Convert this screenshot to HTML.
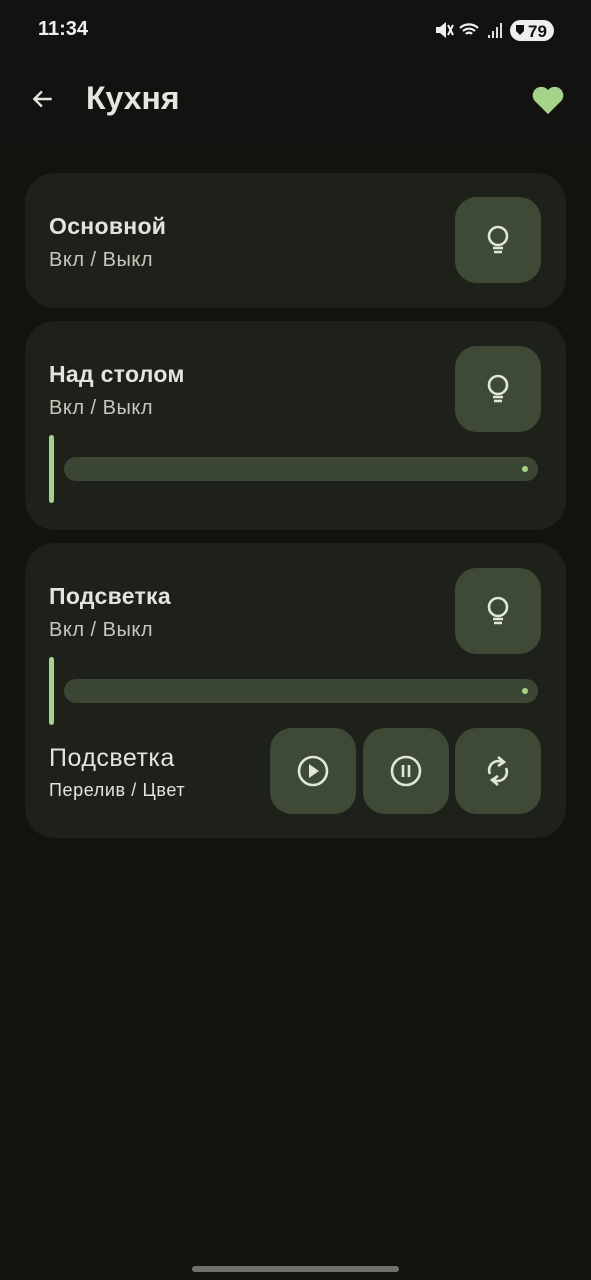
<!DOCTYPE html>
<html><head><meta charset="utf-8"><style>
*{margin:0;padding:0;box-sizing:border-box}
body{width:591px;height:1280px;background:#11130e;font-family:"Liberation Sans",sans-serif;position:relative;overflow:hidden;color:#e3e4da}
.top{position:absolute;left:0;top:0;width:591px;height:148px;background:#121211}
.time{position:absolute;left:38px;top:18px;font-size:20px;font-weight:bold;color:#f0f0f0}
.title{position:absolute;left:86px;top:80px;font-size:32px;font-weight:bold;color:#e6e6e0}
.card{position:absolute;left:25px;width:541px;background:#1e211a;border-radius:30px}
.name{position:absolute;left:24px;font-size:23px;font-weight:bold;color:#e3e4dc;letter-spacing:0.3px}
.sub{position:absolute;left:24px;font-size:20px;color:#c5c8bc;letter-spacing:0.5px}
.btn{position:absolute;width:86px;height:86px;background:#3e4a35;border-radius:22px;display:flex;align-items:center;justify-content:center}
.vbar{position:absolute;left:24px;width:5px;height:68px;background:#a5d38a;border-radius:3px}
.track{position:absolute;left:39px;width:474px;height:24px;background:#3b4733;border-radius:12px}
.track i{position:absolute;right:10px;top:9px;width:6px;height:6px;border-radius:3px;background:#a5d38a}
</style></head><body>
<div class="top"></div>
<div class="time">11:34</div>
<svg style="position:absolute;left:434px;top:18px" width="122" height="24" viewBox="0 0 122 24">
<path d="M2 9h4l6-5v16l-6-5H2z" fill="#eee"/><path d="M14 7l5 10M19 7l-5 10" stroke="#eee" stroke-width="2"/>
<path d="M26 10a13 13 0 0 1 18 0M29 13a9 9 0 0 1 12 0M32 16a4 4 0 0 1 6 0" stroke="#eee" stroke-width="2.2" fill="none"/>
<path d="M54 17h2v3h-2zM58 13h2v7h-2zM62 9h2v11h-2zM66 5h2v15h-2z" fill="#ddd"/>
<rect x="76" y="2" width="44" height="21" rx="10.5" fill="#eee"/>
<text x="94" y="19" font-size="17" font-weight="bold" fill="#111" font-family="Liberation Sans">79</text>
<path d="M82 7h8v6l-4 4-4-4z" fill="#111"/>
</svg>
<svg style="position:absolute;left:30px;top:86px" width="26" height="26" viewBox="0 0 24 24"><path d="M20 12H5M11 5l-7 7 7 7" stroke="#e6e6e0" stroke-width="2.2" fill="none"/></svg>
<div class="title">Кухня</div>
<svg style="position:absolute;left:531px;top:84px" width="34" height="32" viewBox="0 0 24 22"><path d="M12 21L2.5 11.5A5.5 5.5 0 0 1 12 4a5.5 5.5 0 0 1 9.5 7.5z" fill="#a5d38a"/></svg>

<div class="card" style="top:173px;height:135px">
<div class="name" style="top:40px">Основной</div>
<div class="sub" style="top:76px">Вкл / Выкл</div>
<div class="btn" style="left:430px;top:24px"><svg width="28" height="32" viewBox="0 0 28 32"><circle cx="14" cy="12" r="9" stroke="#dfe8d2" stroke-width="2.6" fill="none"/><path d="M9 24h10M10 28h8" stroke="#dfe8d2" stroke-width="2.4"/></svg></div>
</div>

<div class="card" style="top:321px;height:209px">
<div class="name" style="top:40px">Над столом</div>
<div class="sub" style="top:76px">Вкл / Выкл</div>
<div class="btn" style="left:430px;top:25px"><svg width="28" height="32" viewBox="0 0 28 32"><circle cx="14" cy="12" r="9" stroke="#dfe8d2" stroke-width="2.6" fill="none"/><path d="M9 24h10M10 28h8" stroke="#dfe8d2" stroke-width="2.4"/></svg></div>
<div class="vbar" style="top:114px"></div>
<div class="track" style="top:136px"><i></i></div>
</div>

<div class="card" style="top:543px;height:295px">
<div class="name" style="top:40px">Подсветка</div>
<div class="sub" style="top:76px">Вкл / Выкл</div>
<div class="btn" style="left:430px;top:25px"><svg width="28" height="32" viewBox="0 0 28 32"><circle cx="14" cy="12" r="9" stroke="#dfe8d2" stroke-width="2.6" fill="none"/><path d="M9 24h10M10 28h8" stroke="#dfe8d2" stroke-width="2.4"/></svg></div>
<div class="vbar" style="top:114px"></div>
<div class="track" style="top:136px"><i></i></div>
<div style="position:absolute;left:24px;top:201px;font-size:25px;color:#e3e4dc;letter-spacing:0.5px">Подсветка</div>
<div style="position:absolute;left:24px;top:237px;font-size:18px;color:#e3e4dc;letter-spacing:0.6px">Перелив / Цвет</div>
<div class="btn" style="left:245px;top:185px"><svg width="34" height="34" viewBox="0 0 34 34"><circle cx="17" cy="17" r="14" stroke="#dfe8d2" stroke-width="2.6" fill="none"/><path d="M13 10l10 7-10 7z" fill="#dfe8d2"/></svg></div>
<div class="btn" style="left:338px;top:185px"><svg width="34" height="34" viewBox="0 0 34 34"><circle cx="17" cy="17" r="14" stroke="#dfe8d2" stroke-width="2.6" fill="none"/><path d="M14 11v12M20 11v12" stroke="#dfe8d2" stroke-width="2.6"/></svg></div>
<div class="btn" style="left:430px;top:185px"><svg width="32" height="34" viewBox="0 0 32 34"><path d="M8 20A9 9 0 0 1 20 8" stroke="#dfe8d2" stroke-width="2.6" fill="none"/><path d="M16 3l6 5-6 4" stroke="#dfe8d2" stroke-width="2.6" fill="none"/><path d="M24 14A9 9 0 0 1 12 26" stroke="#dfe8d2" stroke-width="2.6" fill="none"/><path d="M16 31l-6-5 6-4" stroke="#dfe8d2" stroke-width="2.6" fill="none"/></svg></div>
</div>

<div style="position:absolute;left:192px;top:1266px;width:207px;height:6px;border-radius:3px;background:#6e7268"></div>
</body></html>
